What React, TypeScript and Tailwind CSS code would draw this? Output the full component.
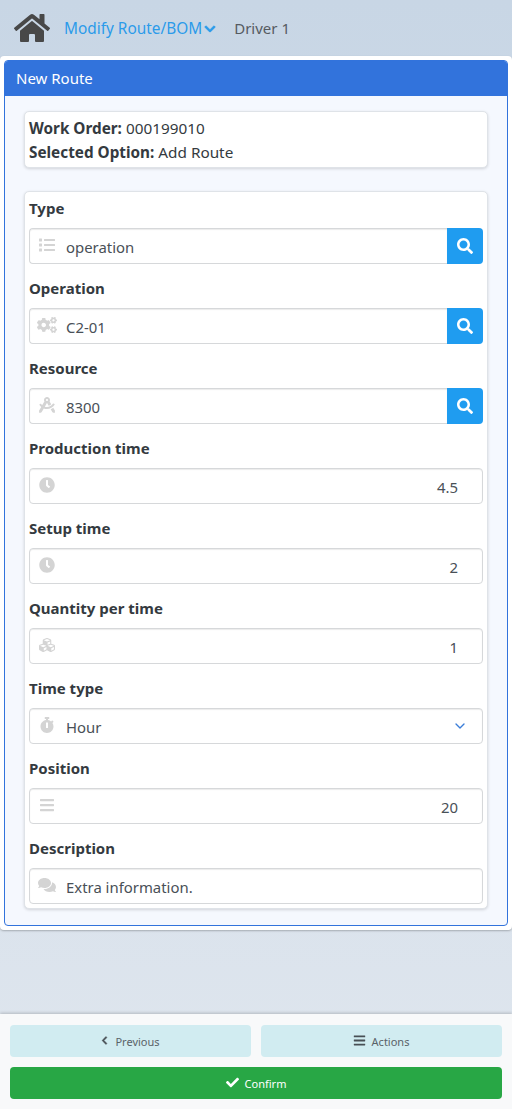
import type { ReactNode } from "react";
import {
  FaBars,
  FaCheck,
  FaChevronDown,
  FaChevronLeft,
  FaClock,
  FaCogs,
  FaComments,
  FaCubes,
  FaDraftingCompass,
  FaHome,
  FaList,
  FaSearch,
  FaStopwatch,
} from "react-icons/fa";
import { LuChevronDown } from "react-icons/lu";

const Field = ({
  label,
  icon,
  value,
  search,
  right,
  select,
}: {
  label: string;
  icon: ReactNode;
  value: string;
  search?: boolean;
  right?: boolean;
  select?: boolean;
}) => {
  return (
    <div className="h-[80px] pt-[6px]">
      <div className="h-[30px] text-[15px] leading-[20px] font-bold text-[#343a40]">{label}</div>
      <div className="flex h-[36px]">
        <div className={`flex flex-1 items-center border border-[#d6d8da] bg-white shadow-[inset_0_1px_1px_rgba(0,0,0,0.08)] ${search ? "rounded-l-[4px] border-r-0" : "rounded-[4px]"}`}>
          <div className="mr-[2px] mb-[2px] flex w-[34px] justify-center text-[#d4d4d4]">{icon}</div>
          <div className={`flex-1 pt-[2px] text-[14.9px] text-[#495057] ${right ? "pr-[24px] text-right" : ""}`}>{value}</div>
          {select && <LuChevronDown className="mr-[14px] text-[16px] text-[#3b7dd8]" />}
        </div>
        {search && (
          <div className="flex w-[36px] items-center justify-center rounded-r-[4px] bg-[#1f9cf0] text-white">
            <FaSearch className="text-[16px]" />
          </div>
        )}
      </div>
    </div>
  );
};

const App = () => {
  return (
    <main className="flex h-[1109px] flex-col bg-gradient-to-b from-[#c8d6e5] to-[#dfe6ee] font-['Noto_Sans',sans-serif]">
      <div className="flex h-[56px] items-center pl-[14px]">
        <FaHome className="text-[36px] text-[#484848]" />
        <div className="ml-[14px] flex items-center pt-[2px] text-[15.4px] text-[#2b9bea]">
          Modify Route/BOM
          <FaChevronDown className="ml-[2px] text-[12px]" stroke="currentColor" strokeWidth={30} />
        </div>
        <div className="ml-[18px] text-[15px] text-[#555b61]">Driver 1</div>
      </div>

      <div className="h-[874px] rounded-[4px] bg-white p-[4px] shadow-[0_1px_2px_rgba(0,0,0,0.25)]">
        <div className="h-[866px] rounded-[4px] border border-[#3273dc] bg-[#f5f8fe]">
          <div className="flex h-[35px] items-center rounded-t-[3px] bg-[#3273dc] pl-[11px] text-[15px] text-white">New Route</div>
          <div className="px-[19px] pt-[15px]">
            <div className="h-[57px] rounded-[5px] border border-[#dfe3e8] bg-white px-[4px] pt-[4px] text-[15.3px] leading-[24px] text-[#343a40] shadow-[0_1px_3px_rgba(0,0,0,0.15)]">
              <div><b>Work Order:</b> 000199010</div>
              <div><b>Selected Option:</b> Add Route</div>
            </div>
            <div className="mt-[23px] h-[718px] rounded-[5px] border border-[#dfe3e8] bg-white px-[4px] shadow-[0_1px_3px_rgba(0,0,0,0.15)]">
              <Field label="Type" icon={<FaList className="text-[16px]" />} value="operation" search />
              <Field label="Operation" icon={<FaCogs className="text-[20px]" />} value="C2-01" search />
              <Field label="Resource" icon={<FaDraftingCompass className="text-[16px]" />} value="8300" search />
              <Field label="Production time" icon={<FaClock className="text-[16px]" />} value="4.5" right />
              <Field label="Setup time" icon={<FaClock className="text-[16px]" />} value="2" right />
              <Field label="Quantity per time" icon={<FaCubes className="text-[16px]" />} value="1" right />
              <Field label="Time type" icon={<FaStopwatch className="text-[16px]" />} value="Hour" select />
              <Field label="Position" icon={<FaBars className="text-[16px]" />} value="20" right />
              <Field label="Description" icon={<FaComments className="text-[18px]" />} value="Extra information." />
            </div>
          </div>
        </div>
      </div>

      <div className="mt-auto flex h-[95px] flex-col gap-[10px] bg-[#f8f9fa] px-[10px] pt-[11px] shadow-[0_-1px_3px_rgba(0,0,0,0.2)]">
        <div className="flex gap-[10px]">
          <div className="flex h-[32px] flex-1 items-center justify-center gap-[6px] rounded-[4px] bg-[#d1ecf1] pr-[1px] text-[11px] text-[#5a6268]">
            <FaChevronLeft className="mb-[2px] text-[9px] text-[#484f55]" stroke="currentColor" strokeWidth={30} />
            <span className="pt-[2px]">Previous</span>
          </div>
          <div className="flex h-[32px] flex-1 items-center justify-center gap-[6px] rounded-[4px] bg-[#d1ecf1] pr-[1px] text-[11px] text-[#5a6268]">
            <FaBars className="mb-[2px] text-[13px] text-[#484f55]" />
            <span className="pt-[2px]">Actions</span>
          </div>
        </div>
        <div className="flex h-[32px] items-center justify-center gap-[6px] rounded-[4px] bg-[#28a745] text-[11px] text-white">
          <FaCheck className="mb-[2px] text-[13px]" />
          <span className="pt-[2px]">Confirm</span>
        </div>
      </div>
    </main>
  );
};

export default App;
